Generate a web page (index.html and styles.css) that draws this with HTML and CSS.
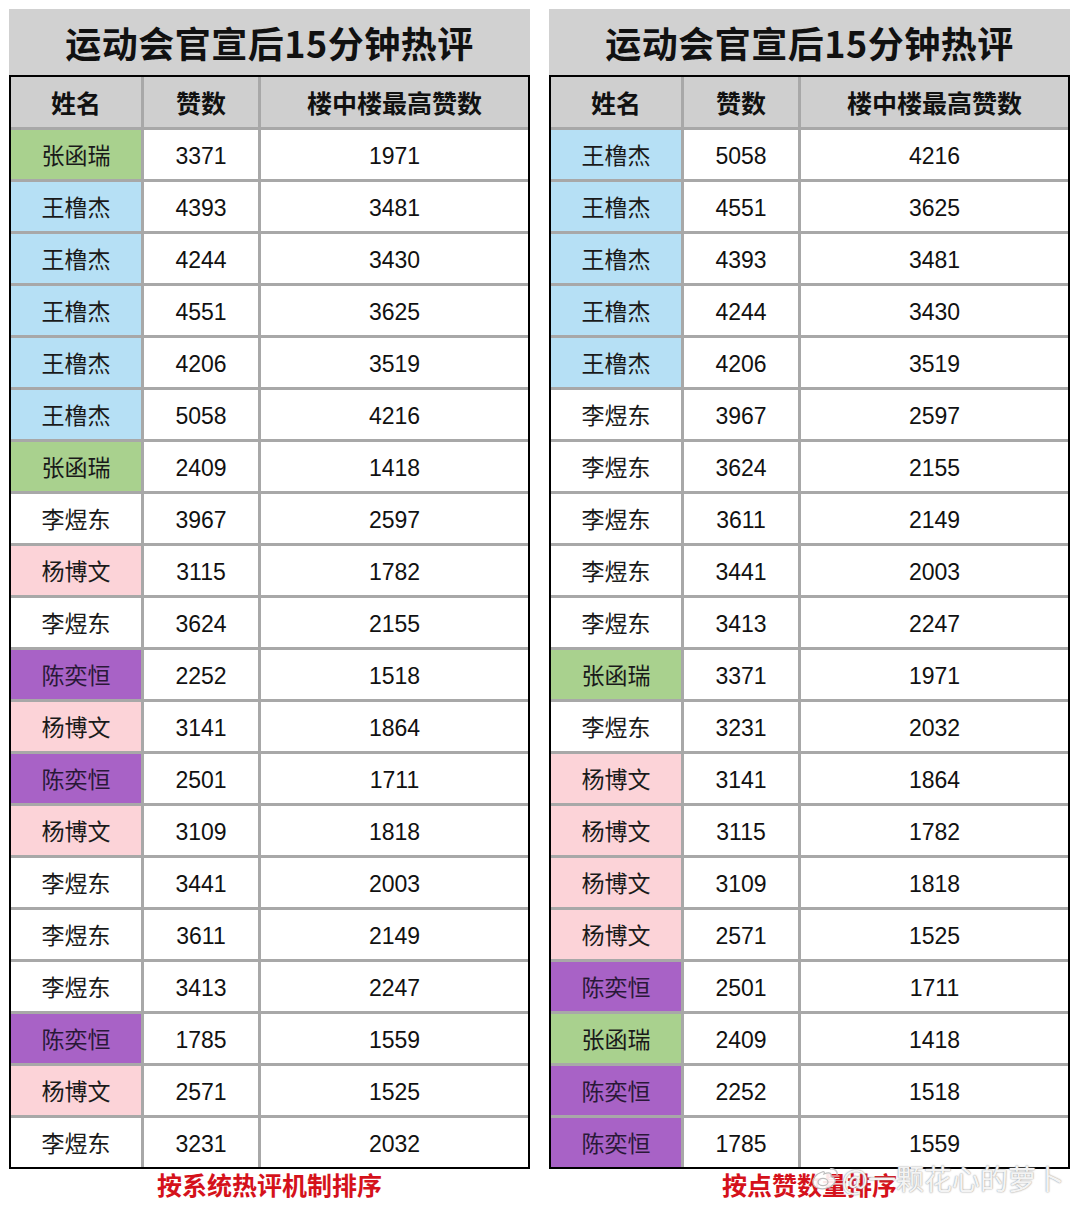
FILE: index.html
```html
<!DOCTYPE html>
<html lang="zh">
<head>
<meta charset="utf-8">
<title>运动会官宣后15分钟热评</title>
<link rel="stylesheet" href="styles.css">
</head>
<body>
<div class="page">
  <section class="panel">
    <div class="title">运动会官宣后15分钟热评</div>
    <div class="grid">
      <div class="hd">姓名</div><div class="hd">赞数</div><div class="hd">楼中楼最高赞数</div>
      <div class="nm g">张函瑞</div><div>3371</div><div>1971</div>
      <div class="nm b">王橹杰</div><div>4393</div><div>3481</div>
      <div class="nm b">王橹杰</div><div>4244</div><div>3430</div>
      <div class="nm b">王橹杰</div><div>4551</div><div>3625</div>
      <div class="nm b">王橹杰</div><div>4206</div><div>3519</div>
      <div class="nm b">王橹杰</div><div>5058</div><div>4216</div>
      <div class="nm g">张函瑞</div><div>2409</div><div>1418</div>
      <div class="nm">李煜东</div><div>3967</div><div>2597</div>
      <div class="nm p">杨博文</div><div>3115</div><div>1782</div>
      <div class="nm">李煜东</div><div>3624</div><div>2155</div>
      <div class="nm v">陈奕恒</div><div>2252</div><div>1518</div>
      <div class="nm p">杨博文</div><div>3141</div><div>1864</div>
      <div class="nm v">陈奕恒</div><div>2501</div><div>1711</div>
      <div class="nm p">杨博文</div><div>3109</div><div>1818</div>
      <div class="nm">李煜东</div><div>3441</div><div>2003</div>
      <div class="nm">李煜东</div><div>3611</div><div>2149</div>
      <div class="nm">李煜东</div><div>3413</div><div>2247</div>
      <div class="nm v">陈奕恒</div><div>1785</div><div>1559</div>
      <div class="nm p">杨博文</div><div>2571</div><div>1525</div>
      <div class="nm">李煜东</div><div>3231</div><div>2032</div>
    </div>
    <div class="caption">按系统热评机制排序</div>
  </section>
  <section class="panel">
    <div class="title">运动会官宣后15分钟热评</div>
    <div class="grid">
      <div class="hd">姓名</div><div class="hd">赞数</div><div class="hd">楼中楼最高赞数</div>
      <div class="nm b">王橹杰</div><div>5058</div><div>4216</div>
      <div class="nm b">王橹杰</div><div>4551</div><div>3625</div>
      <div class="nm b">王橹杰</div><div>4393</div><div>3481</div>
      <div class="nm b">王橹杰</div><div>4244</div><div>3430</div>
      <div class="nm b">王橹杰</div><div>4206</div><div>3519</div>
      <div class="nm">李煜东</div><div>3967</div><div>2597</div>
      <div class="nm">李煜东</div><div>3624</div><div>2155</div>
      <div class="nm">李煜东</div><div>3611</div><div>2149</div>
      <div class="nm">李煜东</div><div>3441</div><div>2003</div>
      <div class="nm">李煜东</div><div>3413</div><div>2247</div>
      <div class="nm g">张函瑞</div><div>3371</div><div>1971</div>
      <div class="nm">李煜东</div><div>3231</div><div>2032</div>
      <div class="nm p">杨博文</div><div>3141</div><div>1864</div>
      <div class="nm p">杨博文</div><div>3115</div><div>1782</div>
      <div class="nm p">杨博文</div><div>3109</div><div>1818</div>
      <div class="nm p">杨博文</div><div>2571</div><div>1525</div>
      <div class="nm v">陈奕恒</div><div>2501</div><div>1711</div>
      <div class="nm g">张函瑞</div><div>2409</div><div>1418</div>
      <div class="nm v">陈奕恒</div><div>2252</div><div>1518</div>
      <div class="nm v">陈奕恒</div><div>1785</div><div>1559</div>
    </div>
    <div class="caption">按点赞数量排序</div>
    <div class="watermark">
      <svg class="wb" viewBox="0 0 30 28" width="30" height="28" aria-hidden="true">
        <path d="M12 8 C6 10 2 15 3 19 C4 24 11 26 17 24 C24 22 27 17 24 14 C23 13 21 13 21 12 C22 9 19 8 14 10 C15 8 14 7 12 8 Z" fill="rgba(255,255,255,0.9)" stroke="#bdbdbd" stroke-width="1.2"/>
        <ellipse cx="13" cy="18" rx="5" ry="3.6" fill="none" stroke="#bdbdbd" stroke-width="1.2"/>
        <path d="M20 5 C24 4 28 7 27 11" fill="none" stroke="#c8c8c8" stroke-width="1.4"/>
      </svg>
      <span>@一颗花心的萝卜</span>
    </div>
  </section>
</div>
</body>
</html>
```
FILE: styles.css
```css
html, body {
  margin: 0;
  padding: 0;
  background: #ffffff;
}
body {
  font-family: "Liberation Sans", "Noto Sans CJK SC", sans-serif;
  color: #111111;
}
.page {
  display: flex;
  gap: 19px;
  padding: 9px 0 0 9px;
}
.panel {
  position: relative;
  width: 521px;
  display: flex;
  flex-direction: column;
}
.title {
  height: 66px;
  background: #d1d1d1;
  display: flex;
  align-items: center;
  justify-content: center;
  font-family: "Noto Sans CJK SC", sans-serif;
  font-weight: 700;
  font-size: 36px;
  letter-spacing: 0.5px;
  color: #111111;
}
.grid {
  display: grid;
  grid-template-columns: 130px 114px 1fr;
  grid-template-rows: 50px;
  grid-auto-rows: 49px;
  gap: 3px;
  background: #a8a8a8;
  border: 2px solid #000000;
}
.grid > div {
  background: #ffffff;
  display: flex;
  align-items: center;
  justify-content: center;
  font-size: 23px;
  padding-top: 3px;
}
.grid > .hd {
  background: #cfcfcf;
  font-family: "Noto Sans CJK SC", sans-serif;
  font-weight: 700;
  font-size: 25px;
  padding-top: 0;
}
.grid > .nm {
  font-family: "Noto Sans CJK SC", sans-serif;
  font-size: 23px;
  color: #1a1a1a;
  padding-top: 0;
  padding-bottom: 2px;
}
.grid > .g { background: #a9d18e; }
.grid > .b { background: #b6e0f5; }
.grid > .p { background: #fcd3d8; }
.grid > .v { background: #a862c6; color: #2a1838; }
.caption {
  text-align: center;
  font-family: "Noto Sans CJK SC", sans-serif;
  font-weight: 700;
  font-size: 25px;
  line-height: 30px;
  color: #d5121b;
}
.watermark {
  position: absolute;
  right: 6px;
  bottom: 5px;
  display: flex;
  align-items: center;
  gap: 2px;
  font-family: "Noto Sans CJK SC", sans-serif;
  font-size: 28px;
  line-height: 32px;
  color: rgba(255, 255, 255, 0.9);
  text-shadow: 0 0 2px #a0a0a0, 0 0 1px #b4b4b4;
}
.wb {
  display: block;
}
```
